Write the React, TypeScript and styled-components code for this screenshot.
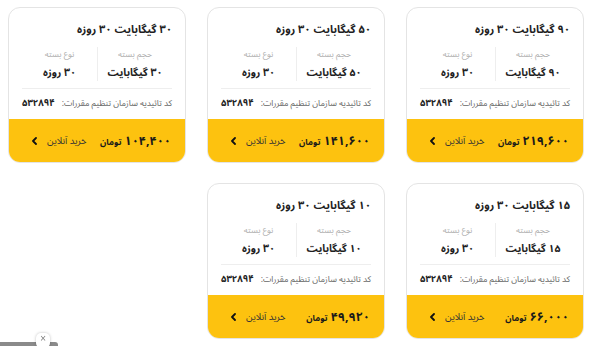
import React from 'react';
import styled, { createGlobalStyle } from 'styled-components';

const GlobalStyle = createGlobalStyle`
    html, body {
        margin: 0;
        padding: 0;
        background: #ffffff;
    }
    body {
        font-family: "Noto Sans Arabic", "DejaVu Sans", sans-serif;
        color: #222;
    }
`

type Plan = {
    volume: string;
    days: string;
    price: string;
}

const plans: Plan[] = [
    { volume: '۹۰', days: '۳۰', price: '۲۱۹,۶۰۰' },
    { volume: '۵۰', days: '۳۰', price: '۱۴۱,۶۰۰' },
    { volume: '۳۰', days: '۳۰', price: '۱۰۴,۴۰۰' },
    { volume: '۱۵', days: '۳۰', price: '۶۶,۰۰۰' },
    { volume: '۱۰', days: '۳۰', price: '۴۹,۹۲۰' },
];

const Page = styled.div`
    direction: rtl;
    padding: 7px 16px 0 0;
    display: grid;
    grid-template-columns: repeat(3, 178px);
    column-gap: 21px;
    row-gap: 20px;
`
const Card = styled.div`
    height: 156px;
    box-sizing: border-box;
    border: 1px solid #e4e4e4;
    border-radius: 12px;
    overflow: hidden;
    display: flex;
    flex-direction: column;
    background: #fff;
`
const Body = styled.div`
    flex: 1;
    padding: 13px 13px 0;
    display: flex;
    flex-direction: column;
`
const Title = styled.div`
    font-size: 11px;
    font-weight: bold;
    line-height: 18px;
    color: #1f1f1f;
`
const Specs = styled.div`
    margin-top: 8px;
    display: grid;
    grid-template-columns: 1fr 1fr;
    padding-bottom: 7px;
    border-bottom: 1px solid #eeeeee;
`
const Spec = styled.div<{ $divider?: boolean }>`
    display: flex;
    flex-direction: column;
    align-items: center;
    gap: 4px;
    border-left: ${(p) => (p.$divider ? '1px solid #eeeeee' : 'none')};
`
const SpecLabel = styled.div`
    font-size: 8.5px;
    line-height: 14px;
    color: #b0b0b0;
`
const SpecValue = styled.div`
    font-size: 10.5px;
    font-weight: bold;
    line-height: 16px;
    color: #1f1f1f;
`
const CodeRow = styled.div`
    margin-top: 7px;
    display: flex;
    justify-content: space-between;
    align-items: center;
    line-height: 14px;
`
const CodeLabel = styled.span`
    font-size: 8.5px;
    color: #666;
`
const CodeValue = styled.span`
    font-size: 9.5px;
    font-weight: bold;
    color: #222;
`
const Footer = styled.div`
    height: 43px;
    background: #fdc20f;
    padding: 0 14px 0 22px;
    display: flex;
    justify-content: space-between;
    align-items: center;
`
const Price = styled.div`
    font-size: 12.5px;
    font-weight: bold;
    color: #1a1a1a;
`
const Currency = styled.span`
    font-size: 8.5px;
    margin-right: 3px;
`
const Buy = styled.div`
    display: flex;
    align-items: center;
    gap: 9px;
    font-size: 9.5px;
    color: #333;
`
const ChatBar = styled.div`
    position: fixed;
    left: 0;
    bottom: 0;
    width: 58px;
    height: 4px;
    background: #8a8a8a;
    border-radius: 0 3px 0 0;
`
const CloseBubble = styled.div`
    position: fixed;
    left: 36px;
    bottom: -2px;
    width: 14px;
    height: 15px;
    border-radius: 5px;
    background: #fff;
    box-shadow: 0 0 3px rgba(0, 0, 0, 0.25);
    font-family: "DejaVu Sans", sans-serif;
    font-size: 8px;
    color: #777;
    display: flex;
    justify-content: center;
    padding-top: 1px;
    box-sizing: border-box;
`

const Chevron = () => (
    <svg width="7" height="8" viewBox="0 0 7 8">
        <path d="M5 1 L2 4 L5 7" fill="none" stroke="#111" strokeWidth="1.8" strokeLinecap="round" strokeLinejoin="round" />
    </svg>
)

const PlanCard: React.FC<{ plan: Plan }> = ({ plan }) => (
    <Card>
        <Body>
            <Title>{plan.volume} گیگابایت {plan.days} روزه</Title>
            <Specs>
                <Spec $divider>
                    <SpecLabel>حجم بسته</SpecLabel>
                    <SpecValue>{plan.volume} گیگابایت</SpecValue>
                </Spec>
                <Spec>
                    <SpecLabel>نوع بسته</SpecLabel>
                    <SpecValue>{plan.days} روزه</SpecValue>
                </Spec>
            </Specs>
            <CodeRow>
                <CodeLabel>کد تائیدیه سازمان تنظیم مقررات:</CodeLabel>
                <CodeValue>۵۳۲۸۹۴</CodeValue>
            </CodeRow>
        </Body>
        <Footer>
            <Price>{plan.price}<Currency>تومان</Currency></Price>
            <Buy>
                <span>خرید آنلاین</span>
                <Chevron />
            </Buy>
        </Footer>
    </Card>
)

const App: React.FC = () => (
    <>
        <GlobalStyle />
        <Page>
            {plans.map((p) => (
                <PlanCard key={p.volume} plan={p} />
            ))}
        </Page>
        <ChatBar />
        <CloseBubble>×</CloseBubble>
    </>
)

export default App;
